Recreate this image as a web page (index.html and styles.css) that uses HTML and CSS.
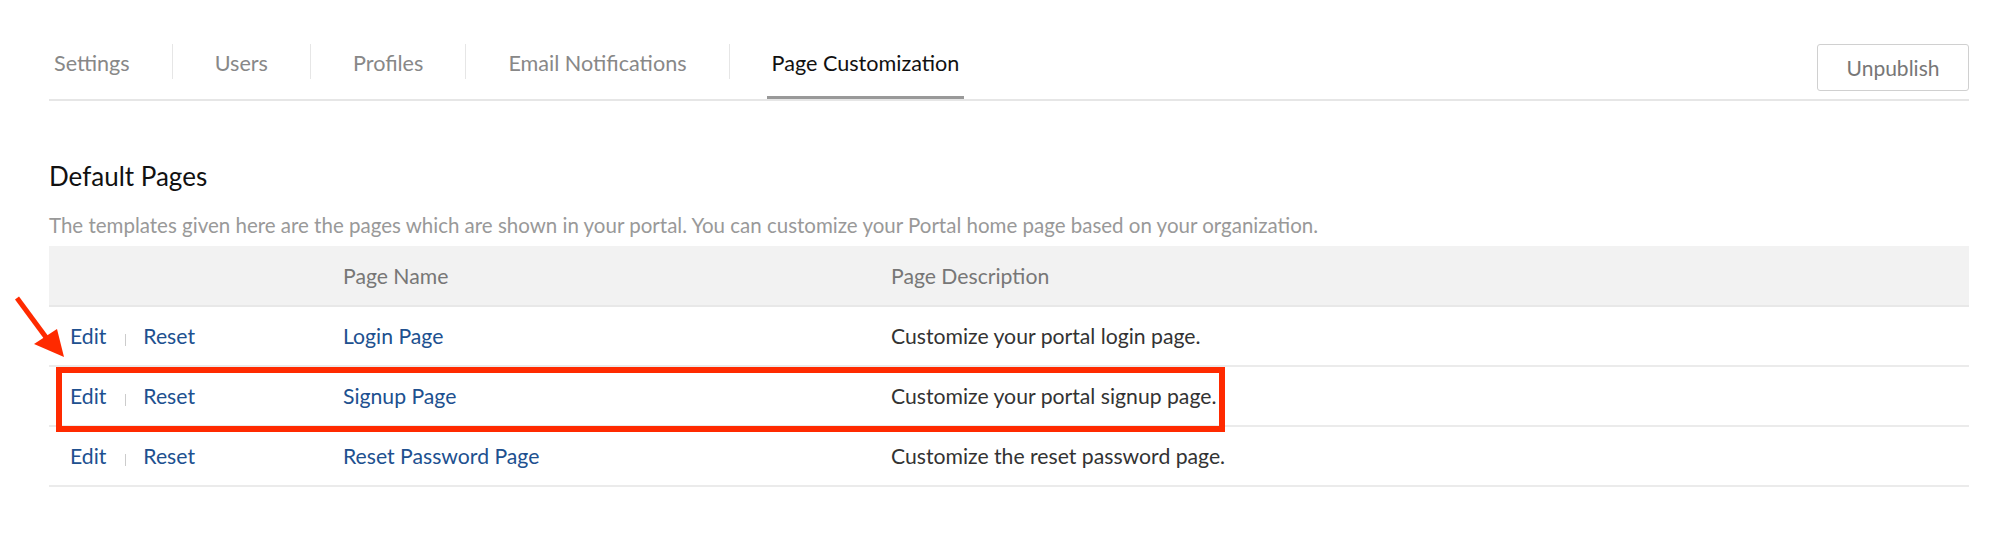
FILE: index.html
```html
<!DOCTYPE html>
<html lang="en">

<head>
    <meta charset="UTF-8">
    <meta name="viewport" content="width=device-width, initial-scale=1.0">
    <title>Page Customization</title>
    <link rel="stylesheet" href="styles.css">
</head>
<body>
    <div class="page">
        <div class="tabbar">
            <ul class="tabs">
                <li class="tab first"><a href="#">Settings</a></li>
                <li class="sep"></li>
                <li class="tab"><a href="#">Users</a></li>
                <li class="sep"></li>
                <li class="tab"><a href="#">Profiles</a></li>
                <li class="sep"></li>
                <li class="tab"><a href="#">Email Notifications</a></li>
                <li class="sep"></li>
                <li class="tab"><a href="#" class="active">Page Customization</a></li>
            </ul>
            <button class="btn">Unpublish</button>
        </div>

        <h2>Default Pages</h2>
        <p class="desc">The templates given here are the pages which are shown in your portal. You can customize your Portal home page based on your organization.</p>

        <table>
            <thead>
                <tr>
                    <th class="col-actions"></th>
                    <th class="col-name">Page Name</th>
                    <th>Page Description</th>
                </tr>
            </thead>
            <tbody>
                <tr>
                    <td><a href="#">Edit</a><span class="pipe"></span><a href="#">Reset</a></td>
                    <td><a href="#">Login Page</a></td>
                    <td>Customize your portal login page.</td>
                </tr>
                <tr>
                    <td><a href="#">Edit</a><span class="pipe"></span><a href="#">Reset</a></td>
                    <td><a href="#">Signup Page</a></td>
                    <td>Customize your portal signup page.</td>
                </tr>
                <tr>
                    <td><a href="#">Edit</a><span class="pipe"></span><a href="#">Reset</a></td>
                    <td><a href="#">Reset Password Page</a></td>
                    <td>Customize the reset password page.</td>
                </tr>
            </tbody>
        </table>

        <!-- annotation overlay -->
        <div class="highlight"></div>
        <svg class="arrow" width="80" height="80" viewBox="0 290 80 80">
            <line x1="17" y1="298" x2="48" y2="340" stroke="#ff2a00" stroke-width="5" />
            <polygon points="64,357 34,344 57,329" fill="#ff2a00" />
        </svg>
    </div>
</body>
</html>
```

FILE: styles.css
```css
body {
    margin: 0;
    padding: 0;
    font-family: Lato, "Open Sans", sans-serif;
    color: #333;
    background: #fff;
}

.page {
    position: relative;
    padding: 44px 31px 0 49px;
}

a {
    color: #20508f;
    text-decoration: none;
}

.tabbar {
    display: flex;
    justify-content: space-between;
    align-items: flex-start;
    border-bottom: 2px solid #e6e6e6;
}

.tabs {
    display: flex;
    list-style: none;
    margin: 0;
    padding: 0;
}

.tab {
    padding: 0 37px;
}

.tab.first {
    padding-left: 0;
}

.tab a {
    display: block;
    padding: 7px 5px 21px;
    font-size: 21.6px;
    line-height: 24px;
    color: #888;
    border-bottom: 3px solid transparent;
}

.tab a.active {
    color: #111;
    border-bottom-color: #999;
}

.sep {
    width: 1px;
    height: 35px;
    background: #e6e6e6;
}

.btn {
    width: 152px;
    height: 47px;
    padding: 0;
    font-family: inherit;
    font-size: 21px;
    color: #777;
    background: #fff;
    border: 1px solid #d0d0d0;
    border-radius: 3px;
}

h2 {
    margin: 59px 0 0;
    font-size: 26px;
    line-height: 32px;
    font-weight: normal;
    color: #111;
}

.desc {
    margin: 20px 0 0;
    font-size: 20.5px;
    line-height: 26px;
    color: #999;
}

table {
    width: 100%;
    margin-top: 8px;
    border-collapse: collapse;
    font-size: 21.2px;
    line-height: 26px;
}

th, td {
    padding: 0 0 0 21px;
    text-align: left;
    vertical-align: middle;
}

th {
    height: 59px;
    font-weight: normal;
    color: #777;
    background: #f2f2f2;
    border-bottom: 2px solid #e8e8e8;
}

td {
    height: 58px;
    color: #333;
    border-bottom: 2px solid #ebebeb;
}

.col-actions {
    width: 252px;
}

.col-name {
    width: 527px;
}

.pipe {
    display: inline-block;
    width: 1px;
    height: 12px;
    margin: 0 17px 0 19px;
    vertical-align: -2px;
    background: #ccc;
}

.highlight {
    position: absolute;
    left: 56px;
    top: 367px;
    width: 1157px;
    height: 53px;
    border: 6px solid #ff2a00;
}

.arrow {
    position: absolute;
    left: 0;
    top: 290px;
}
```
